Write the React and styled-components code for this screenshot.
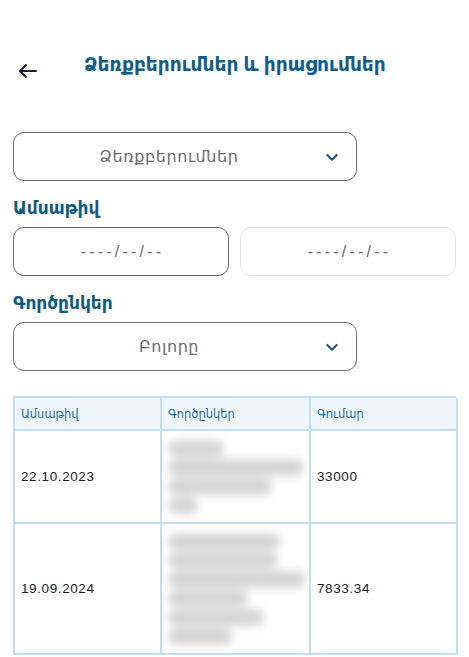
import React from "react";
import styled, { createGlobalStyle } from "styled-components";

const Global = createGlobalStyle`
  html, body { margin: 0; padding: 0; background: #fff; }
  body { font-family: "Liberation Sans", "DejaVu Sans", sans-serif; }
  * { box-sizing: border-box; }
`;

const Page = styled.div`
  width: 469px;
  min-height: 657px;
  padding: 48px 13px 0 13px;
  display: flex;
  flex-direction: column;
`;

const Header = styled.div`
  display: flex;
  align-items: center;
  height: 34px;
`;

const BackButton = styled.button`
  border: none;
  background: none;
  padding: 0;
  margin: 12px 0 0 3px;
  width: 24px;
  height: 24px;
  display: flex;
  align-items: center;
  justify-content: center;
  color: #1c1b2e;
`;

const Title = styled.h1`
  margin: 0 0 0 44px;
  font-size: 18.6px;
  font-weight: 600;
  color: #0d5e8b;
`;

const Select = styled.div`
  margin-top: ${(p) => p.$top}px;
  width: 344px;
  height: 49px;
  border: 1.5px solid #6f6f6f;
  border-radius: 11px;
  display: flex;
  align-items: center;
  padding: 0 16px 0 0;
`;

const SelectText = styled.span`
  flex: 1;
  text-align: center;
  font-size: 16px;
  color: #6a6a6a;
  letter-spacing: 0.6px;
`;

const Chevron = styled.span`
  display: flex;
  color: #1b5876;
`;

const Label = styled.div`
  margin-top: ${(p) => p.$top}px;
  font-size: 17px;
  font-weight: 700;
  color: #0d5a86;
  line-height: 20px;
`;

const DateRow = styled.div`
  margin-top: 8px;
  display: grid;
  grid-template-columns: 216px 216px;
  column-gap: 11px;
`;

const DateInput = styled.div`
  height: 49px;
  border-radius: 11px;
  border: 1.5px solid ${(p) => (p.$active ? "#6a6a6a" : "#e2e2e2")};
  display: flex;
  align-items: center;
  justify-content: center;
  font-size: 16px;
  color: #666;
  letter-spacing: 3.2px;
  padding-left: 3px;
`;

const Table = styled.div`
  margin-top: 25px;
  width: 443px;
  display: grid;
  grid-template-columns: 147px 149px 147px;
  border-top: 2px solid #c5ddf1;
  border-left: 2px solid #c5ddf1;
`;

const Cell = styled.div`
  border-right: 2px solid #c5ddf1;
  border-bottom: 2px solid #c5ddf1;
  padding: 0 6px;
  display: flex;
  align-items: center;
  height: ${(p) => p.$h}px;
  background: ${(p) => (p.$head ? "#eef5fb" : "#fff")};
  font-size: ${(p) => (p.$head ? "11.5px" : "13.5px")};
  color: ${(p) => (p.$head ? "#1d6c9e" : "#222")};
  letter-spacing: ${(p) => (p.$head ? "0" : "0.6px")};
`;

const Blurred = styled.div`
  display: flex;
  flex-direction: column;
  align-items: flex-start;
  filter: blur(4.5px);
`;

const BlurLine = styled.span`
  display: block;
  height: 17px;
  margin: 1px 0;
  border-radius: 8px;
  background: #d6d6d6;
`;

const ChevronIcon = () => (
  <svg width="16" height="16" viewBox="0 0 24 24" fill="none" stroke="currentColor" strokeWidth="3.2" strokeLinecap="round" strokeLinejoin="round">
    <path d="M5 9l7 7 7-7" />
  </svg>
);

const rows = [
  { date: "22.10.2023", amount: "33000", h: 93, lines: [56, 136, 104, 30] },
  { date: "19.09.2024", amount: "7833.34", h: 131, lines: [112, 110, 138, 80, 96, 64] },
];

export default function App() {
  return (
    <>
      <Global />
      <Page>
        <Header>
          <BackButton aria-label="back">
            <svg width="24" height="24" viewBox="0 0 24 24" fill="none" stroke="currentColor" strokeWidth="2" strokeLinecap="round" strokeLinejoin="round">
              <path d="M20 12H4" />
              <path d="M10 6l-6 6 6 6" />
            </svg>
          </BackButton>
          <Title>Ձեռքբերումներ և իրացումներ</Title>
        </Header>
        <Select $top={50}>
          <SelectText>Ձեռքբերումներ</SelectText>
          <Chevron><ChevronIcon /></Chevron>
        </Select>
        <Label $top={18}>Ամսաթիվ</Label>
        <DateRow>
          <DateInput $active>----/--/--</DateInput>
          <DateInput>----/--/--</DateInput>
        </DateRow>
        <Label $top={18}>Գործընկեր</Label>
        <Select $top={8}>
          <SelectText>Բոլորը</SelectText>
          <Chevron><ChevronIcon /></Chevron>
        </Select>
        <Table>
          <Cell $head $h={33}>Ամսաթիվ</Cell>
          <Cell $head $h={33}>Գործընկեր</Cell>
          <Cell $head $h={33}>Գումար</Cell>
          {rows.map((r) => (
            <React.Fragment key={r.date}>
              <Cell $h={r.h}>{r.date}</Cell>
              <Cell $h={r.h}>
                <Blurred>
                  {r.lines.map((w, i) => (
                    <BlurLine key={i} style={{ width: w }} />
                  ))}
                </Blurred>
              </Cell>
              <Cell $h={r.h}>{r.amount}</Cell>
            </React.Fragment>
          ))}
        </Table>
      </Page>
    </>
  );
}
